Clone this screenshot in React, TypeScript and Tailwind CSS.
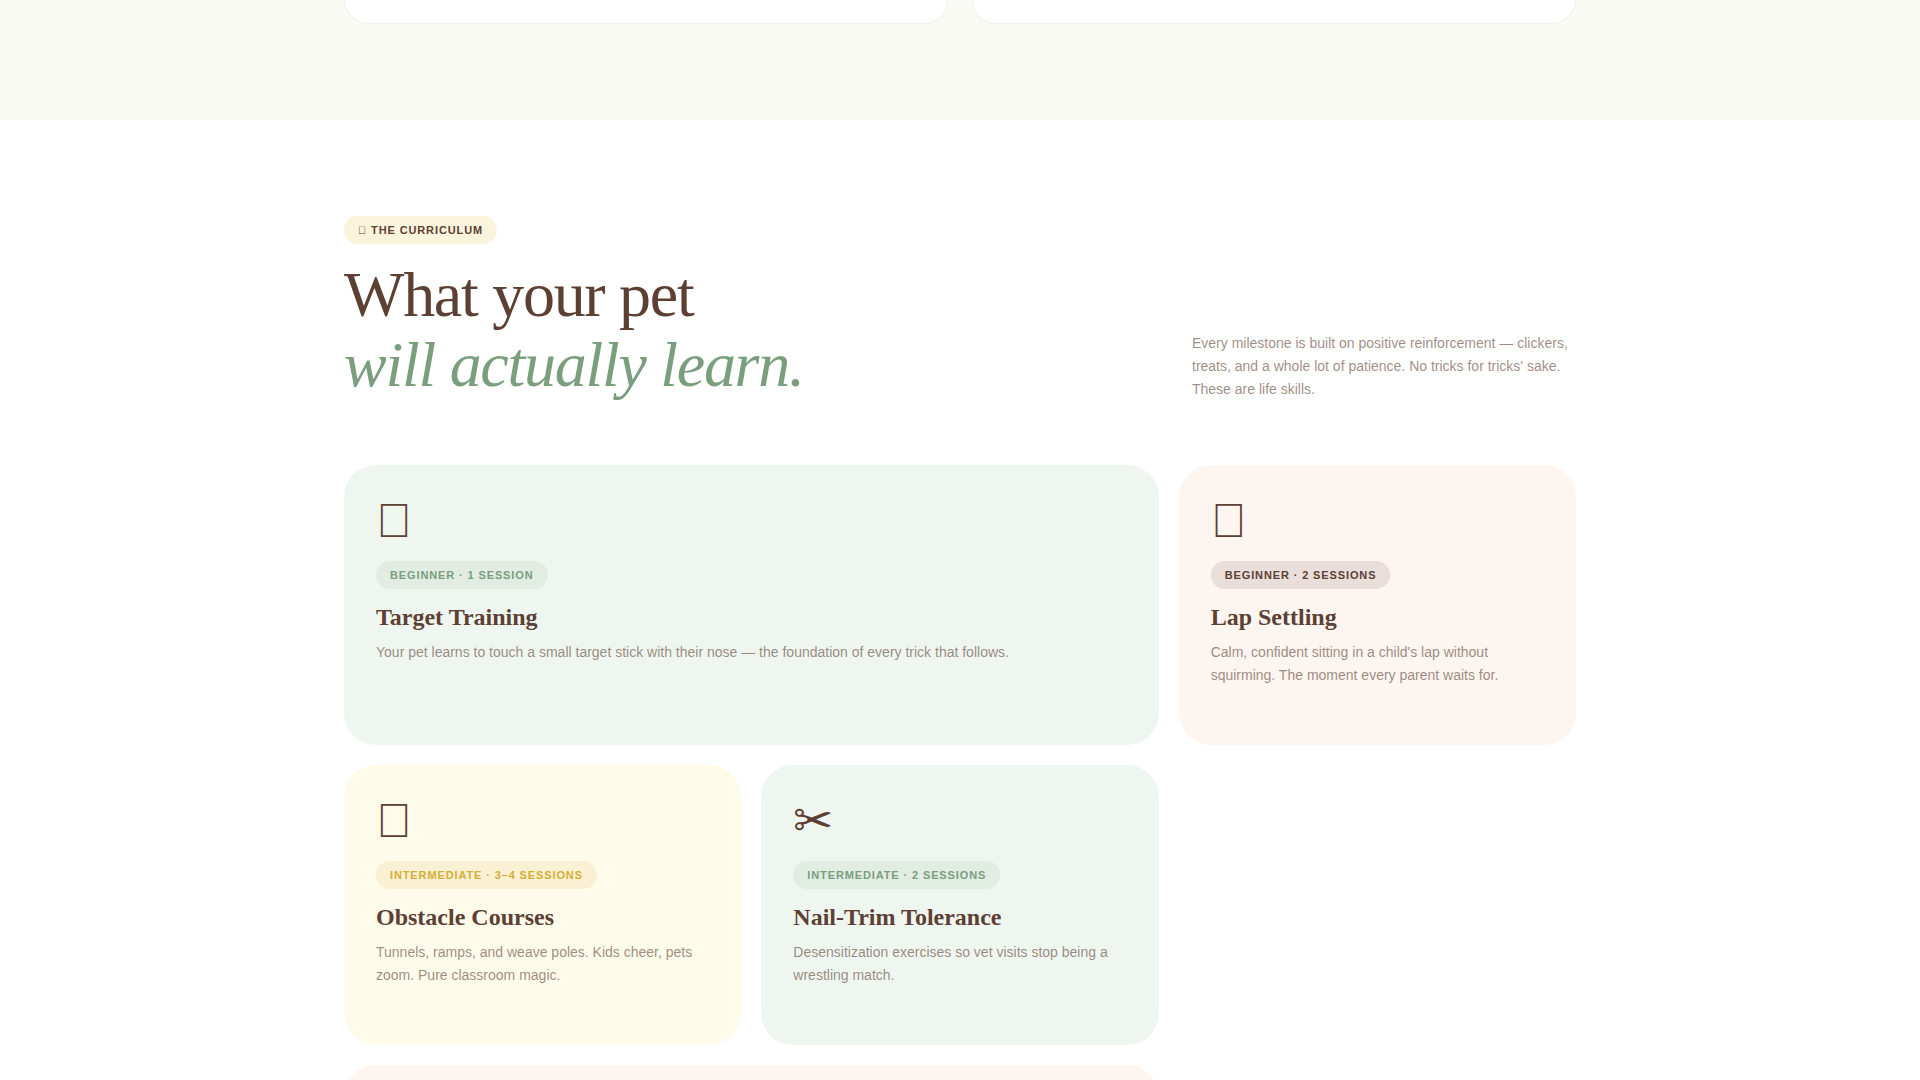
import clsx from "clsx";

// unassigned code point, drawn by the font as an empty box
const BOX = "\u{10FFFD}";

const lessons = [
  {
    icon: BOX,
    level: "Beginner · 1 session",
    title: "Target Training",
    text: "Your pet learns to touch a small target stick with their nose — the foundation of every trick that follows.",
    card: "bg-[#eff6f0] md:col-span-2",
    pill: "bg-[#e1ece3] text-[#7a9e7e]",
  },
  {
    icon: BOX,
    level: "Beginner · 2 sessions",
    title: "Lap Settling",
    text: "Calm, confident sitting in a child's lap without squirming. The moment every parent waits for.",
    card: "bg-[#fdf5f0]",
    pill: "bg-[#e9ded9] text-[#5c4033]",
  },
  {
    icon: BOX,
    level: "Intermediate · 3–4 sessions",
    title: "Obstacle Courses",
    text: "Tunnels, ramps, and weave poles. Kids cheer, pets zoom. Pure classroom magic.",
    card: "bg-[#fffbea]",
    pill: "bg-[#faf0d3] text-[#d4af37]",
  },
  {
    icon: "✂",
    level: "Intermediate · 2 sessions",
    title: "Nail-Trim Tolerance",
    text: "Desensitization exercises so vet visits stop being a wrestling match.",
    card: "bg-[#eff6f0]",
    pill: "bg-[#e1ece3] text-[#7a9e7e]",
  },
];

function Pill({ className, children }: { className: string; children: React.ReactNode }) {
  return (
    <span
      className={clsx(
        "block w-fit rounded-full px-3.5 py-1.5 text-[11px] leading-4 font-bold tracking-[0.08em] uppercase",
        className
      )}
    >
      {children}
    </span>
  );
}

export default function App() {
  return (
    <main className="h-screen overflow-hidden bg-white font-['Liberation_Sans',Arial,sans-serif] text-[#5c4033]">
      <section className="bg-[#f9faf4] pb-24">
        <div className="mx-auto grid max-w-7xl grid-cols-2 gap-6 px-6">
          <div className="h-6 rounded-b-3xl border border-t-0 border-[#f0f1ec] bg-white" />
          <div className="h-6 rounded-b-3xl border border-t-0 border-[#f0f1ec] bg-white" />
        </div>
      </section>

      <section className="mx-auto max-w-7xl px-6 py-24">
        <div className="mb-16 flex flex-col justify-between gap-6 md:flex-row md:items-end">
          <div>
            <Pill className="mb-4 bg-[#fbf4dc]">{BOX} The Curriculum</Pill>
            <h2 className="font-['Liberation_Serif',serif] text-[64px] leading-[1.1] tracking-[-0.02em]">
              What your pet
              <br />
              <em className="text-[#7a9e7e]">will actually learn.</em>
            </h2>
          </div>
          <p className="max-w-sm text-sm leading-[23px] text-[#5c4033]/60">
            Every milestone is built on positive reinforcement — clickers,
            treats, and a whole lot of patience. No tricks for tricks' sake.
            These are life skills.
          </p>
        </div>

        <div className="grid auto-rows-[280px] gap-5 md:grid-cols-3">
          {lessons.map((lesson) => (
            <article key={lesson.title} className={clsx("rounded-[32px] p-8", lesson.card)}>
              <div aria-hidden="true" className="mb-4 h-12 text-5xl leading-12">
                {lesson.icon}
              </div>
              <Pill className={lesson.pill}>{lesson.level}</Pill>
              <h3 className="mt-3 mb-2 font-['Liberation_Serif',serif] text-2xl font-bold">
                {lesson.title}
              </h3>
              <p className="text-sm leading-[23px] text-[#5c4033]/60">{lesson.text}</p>
            </article>
          ))}
          <div className="rounded-[32px] bg-[#fdf5f0] md:col-span-2" />
        </div>
      </section>
    </main>
  );
}
